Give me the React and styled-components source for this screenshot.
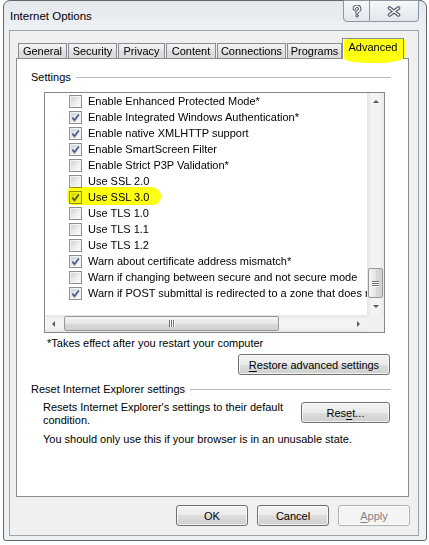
import React from "react";
import styled, { createGlobalStyle, css } from "styled-components";

const GlobalStyle = createGlobalStyle`
  * { box-sizing: border-box; }
  body {
    margin: 0;
    background: #fff;
    font-family: "Liberation Sans", Arial, sans-serif;
    font-size: 11px;
    color: #000;
  }
`;

const Window = styled.div`
  margin-left: 3px;
  width: 424px;
  height: 541px;
  border: 1px solid #5f6670;
  border-radius: 7px 7px 3px 3px;
  background: linear-gradient(#e4e9ee, #eef1f4 30px, #eef1f4);
  display: flex;
  flex-direction: column;
`;

const TitleBar = styled.div`
  height: 29px;
  display: flex;
  justify-content: space-between;
  align-items: flex-start;
  padding: 0 7px 0 6px;
`;

const Title = styled.div`
  padding-top: 8px;
  line-height: 14px;
  font-size: 11.5px;
`;

const Caption = styled.div`
  display: flex;
  margin-top: -1px;
`;

const CapButton = styled.div`
  width: ${(p) => p.$w}px;
  height: 22px;
  border: 1px solid #8b97a5;
  background: linear-gradient(#f6f8fa, #e2e6eb);
  display: flex;
  align-items: center;
  justify-content: center;
  ${(p) =>
    p.$first
      ? css`border-bottom-left-radius: 4px;`
      : css`
          border-left: none;
          border-bottom-right-radius: 4px;
        `}
`;

const Client = styled.div`
  margin: 0 7px 0 5px;
  height: 506px;
  border: 1px solid #9aa2ab;
  background: #f0f0f0;
  padding: 7px 8px 0 6px;
  display: flex;
  flex-direction: column;
`;

const TabStrip = styled.div`
  display: flex;
  align-items: flex-end;
  height: 20px;
  padding-left: 2px;
  gap: 1px;
  position: relative;
  z-index: 1;
`;

const Tab = styled.div`
  position: relative;
  width: ${(p) => p.$w}px;
  height: 15px;
  border: 1px solid #898c95;
  border-bottom: none;
  background: linear-gradient(#f4f4f4, #e6e6e6 50%, #dedede 50%, #dadada);
  display: flex;
  align-items: center;
  justify-content: center;
  line-height: 13px;
  ${(p) =>
    p.$active &&
    css`
      height: 21px;
      margin-left: -1px;
      margin-bottom: -1px;
      background: #fff;
      padding-bottom: 4px;
      &::after {
        content: "";
        position: absolute;
        left: 1px;
        right: -2px;
        top: 0;
        bottom: -4px;
        background: #ffff10;
        mix-blend-mode: multiply;
        border-radius: 2px 3px 45% 40% / 2px 3px 7px 5px;
      }
    `}
`;

const Panel = styled.div`
  width: 393px;
  height: 439px;
  border: 1px solid #898c95;
  background: #fff;
  padding: 11px 18px 0 14px;
  display: flex;
  flex-direction: column;
`;

const GroupHead = styled.div`
  display: flex;
  align-items: center;
  height: 14px;
  gap: 5px;
  margin-top: ${(p) => p.$top || 0}px;
`;

const GroupLine = styled.div`
  flex: 1;
  height: 1px;
  background: #b8bcc1;
  margin-right: -1px;
`;

const ListBox = styled.div`
  margin: 8px 5px 0 13px;
  height: 241px;
  border: 1px solid #828790;
  display: grid;
  grid-template-columns: 1fr 17px;
  grid-template-rows: 1fr 17px;
`;

const ListContent = styled.div`
  overflow: hidden;
  background: #fff;
  isolation: isolate;
`;

const Row = styled.div`
  display: flex;
  align-items: center;
  height: 16px;
  padding-left: 24px;
  white-space: nowrap;
`;

const Item = styled.div`
  display: flex;
  align-items: center;
  gap: 6px;
  position: relative;
  ${(p) =>
    p.$marked &&
    css`
      &::after {
        content: "";
        position: absolute;
        left: -2px;
        right: -12px;
        top: -4px;
        bottom: -1px;
        background: #ffff10;
        mix-blend-mode: multiply;
        border-radius: 5px 10px 9px 6px / 6px 9px 8px 6px;
      }
    `}
`;

const Box = styled.span`
  flex: none;
  width: 13px;
  height: 13px;
  border: 1px solid #8e8f8f;
  background: linear-gradient(135deg, #c9ccd2, #eeeff1 60%, #fafafa);
  box-shadow: inset 0 0 0 1px #f4f4f4;
  display: flex;
  align-items: center;
  justify-content: center;
`;

const VScroll = styled.div`
  display: flex;
  flex-direction: column;
  background: linear-gradient(90deg, #e4e4e4, #f3f3f3 25%, #f3f3f3 75%, #e8e8e8);
`;

const HScroll = styled.div`
  display: flex;
  background: linear-gradient(#e4e4e4, #f3f3f3 25%, #f3f3f3 75%, #e8e8e8);
`;

const Corner = styled.div`
  background: #f0f0f0;
`;

const ArrowBtn = styled.div`
  flex: none;
  width: 17px;
  height: 17px;
  display: flex;
  align-items: center;
  justify-content: center;
`;

const Arrow = styled.span`
  width: 0;
  height: 0;
  border: 3px solid transparent;
  ${(p) => p.$dir === "up" && css`border-top: none; border-bottom: 3px solid #5a5a5a;`}
  ${(p) => p.$dir === "down" && css`border-bottom: none; border-top: 3px solid #5a5a5a;`}
  ${(p) => p.$dir === "left" && css`border-left: none; border-right: 3px solid #5a5a5a;`}
  ${(p) => p.$dir === "right" && css`border-right: none; border-left: 3px solid #5a5a5a;`}
`;

const Track = styled.div`
  flex: 1;
  display: flex;
  flex-direction: ${(p) => (p.$vertical ? "column" : "row")};
  justify-content: ${(p) => (p.$vertical ? "flex-end" : "flex-start")};
`;

const Thumb = styled.div`
  border: 1px solid #979797;
  border-radius: 2px;
  display: flex;
  align-items: center;
  justify-content: center;
  ${(p) =>
    p.$vertical
      ? css`
          height: 30px;
          margin: 0 1px;
          background: linear-gradient(90deg, #f5f5f5, #e6e6e6 50%, #d9d9d9 50%, #d2d2d2);
        `
      : css`
          width: 215px;
          margin: 1px 0 1px 2px;
          background: linear-gradient(#f5f5f5, #e6e6e6 50%, #d9d9d9 50%, #d2d2d2);
        `}
`;

const Grip = styled.span`
  display: flex;
  flex-direction: ${(p) => (p.$vertical ? "column" : "row")};
  gap: 1px;
  & > i {
    display: block;
    background: #6f6f6f;
    box-shadow: ${(p) => (p.$vertical ? "0 1px 0 #fff" : "1px 0 0 #fff")};
    width: ${(p) => (p.$vertical ? "7px" : "1px")};
    height: ${(p) => (p.$vertical ? "1px" : "7px")};
  }
`;

const Note = styled.div`
  margin: ${(p) => p.$top}px 0 0 ${(p) => p.$left}px;
  line-height: 14px;
`;

const ButtonRow = styled.div`
  display: flex;
  justify-content: flex-end;
  margin-top: 4px;
`;

const Button = styled.div`
  width: ${(p) => p.$w}px;
  height: 21px;
  border: 1px solid #707070;
  border-radius: 3px;
  background: linear-gradient(#f2f2f2, #ebebeb 50%, #dddddd 50%, #cfcfcf);
  box-shadow: inset 0 0 0 1px rgba(255, 255, 255, 0.7);
  display: flex;
  align-items: center;
  justify-content: center;
  margin-top: ${(p) => p.$top || 0}px;
  ${(p) =>
    p.$disabled &&
    css`
      border-color: #adb2b5;
      background: #f4f4f4;
      color: #838383;
    `}
`;

const Key = styled.span`
  text-decoration: underline;
  text-underline-offset: 2px;
`;

const ResetRow = styled.div`
  display: flex;
  justify-content: space-between;
  align-items: flex-start;
  padding-left: 12px;
  margin-top: 5px;
`;

const ResetText = styled.div`
  line-height: 13px;
`;

const Footer = styled.div`
  display: flex;
  justify-content: flex-end;
  gap: 9px;
  padding-top: 8px;
`;

const tabs = [
  ["General", 49],
  ["Security", 49],
  ["Privacy", 47],
  ["Content", 50],
  ["Connections", 69],
  ["Programs", 55],
  ["Advanced", 62, true],
];

const settings = [
  ["Enable Enhanced Protected Mode*", false],
  ["Enable Integrated Windows Authentication*", true],
  ["Enable native XMLHTTP support", true],
  ["Enable SmartScreen Filter", true],
  ["Enable Strict P3P Validation*", false],
  ["Use SSL 2.0", false],
  ["Use SSL 3.0", true, true],
  ["Use TLS 1.0", false],
  ["Use TLS 1.1", false],
  ["Use TLS 1.2", false],
  ["Warn about certificate address mismatch*", true],
  ["Warn if changing between secure and not secure mode", false],
  ["Warn if POST submittal is redirected to a zone that does not permit posts", true],
];

const HelpGlyph = () => (
  <svg width="10" height="13" viewBox="0 0 10 13">
    <g fill="none" strokeLinecap="round" strokeLinejoin="round">
      <path d="M2.3 4 A2.7 2.7 0 1 1 6 6.4 L5 7.2 V8" stroke="#4e5763" strokeWidth="3.4" />
      <path d="M2.3 4 A2.7 2.7 0 1 1 6 6.4 L5 7.2 V8" stroke="#fff" strokeWidth="1.4" />
      <circle cx="5" cy="10.8" r="1.2" fill="#fff" stroke="#4e5763" strokeWidth="1" />
    </g>
  </svg>
);

const CloseGlyph = () => (
  <svg width="14" height="11" viewBox="0 0 14 11">
    <g strokeLinecap="round">
      <path d="M2.5 2 L11.5 9 M11.5 2 L2.5 9" stroke="#4e5763" strokeWidth="3.6" />
      <path d="M2.5 2 L11.5 9 M11.5 2 L2.5 9" stroke="#fff" strokeWidth="1.5" />
    </g>
  </svg>
);

const Check = () => (
  <svg width="9" height="9" viewBox="0 0 9 9">
    <path d="M1.3 4.6 L3.5 7.3 L7.8 1.4" fill="none" stroke="#4a5b8a" strokeWidth="1.7" />
  </svg>
);

const GripLines = ({ vertical }) => (
  <Grip $vertical={vertical}>
    <i />
    <i />
    <i />
  </Grip>
);

export default function App() {
  return (
    <>
      <GlobalStyle />
      <Window>
        <TitleBar>
          <Title>Internet Options</Title>
          <Caption>
            <CapButton $w={27} $first>
              <HelpGlyph />
            </CapButton>
            <CapButton $w={49}>
              <CloseGlyph />
            </CapButton>
          </Caption>
        </TitleBar>
        <Client>
          <TabStrip>
            {tabs.map(([name, w, active]) => (
              <Tab key={name} $w={w} $active={active}>
                {name}
              </Tab>
            ))}
          </TabStrip>
          <Panel>
            <GroupHead>
              <span>Settings</span>
              <GroupLine />
            </GroupHead>
            <ListBox>
              <ListContent>
                {settings.map(([label, checked, marked]) => (
                  <Row key={label}>
                    <Item $marked={marked}>
                      <Box>{checked && <Check />}</Box>
                      <span>{label}</span>
                    </Item>
                  </Row>
                ))}
              </ListContent>
              <VScroll>
                <ArrowBtn>
                  <Arrow $dir="up" />
                </ArrowBtn>
                <Track $vertical>
                  <Thumb $vertical>
                    <GripLines vertical />
                  </Thumb>
                </Track>
                <ArrowBtn>
                  <Arrow $dir="down" />
                </ArrowBtn>
              </VScroll>
              <HScroll>
                <ArrowBtn>
                  <Arrow $dir="left" />
                </ArrowBtn>
                <Track>
                  <Thumb>
                    <GripLines />
                  </Thumb>
                </Track>
                <ArrowBtn>
                  <Arrow $dir="right" />
                </ArrowBtn>
              </HScroll>
              <Corner />
            </ListBox>
            <Note $top={3} $left={16}>
              *Takes effect after you restart your computer
            </Note>
            <ButtonRow>
              <Button $w={152}>
                <span>
                  <Key>R</Key>estore advanced settings
                </span>
              </Button>
            </ButtonRow>
            <GroupHead $top={7}>
              <span>Reset Internet Explorer settings</span>
              <GroupLine />
            </GroupHead>
            <ResetRow>
              <ResetText>
                Resets Internet Explorer's settings to their default
                <br />
                condition.
              </ResetText>
              <Button $w={89} $top={1}>
                <span>
                  Res<Key>e</Key>t...
                </span>
              </Button>
            </ResetRow>
            <Note $top={5} $left={12}>
              You should only use this if your browser is in an unusable state.
            </Note>
          </Panel>
          <Footer>
            <Button $w={72}>OK</Button>
            <Button $w={72}>Cancel</Button>
            <Button $w={72} $disabled>
              <span>
                <Key>A</Key>pply
              </span>
            </Button>
          </Footer>
        </Client>
      </Window>
    </>
  );
}
